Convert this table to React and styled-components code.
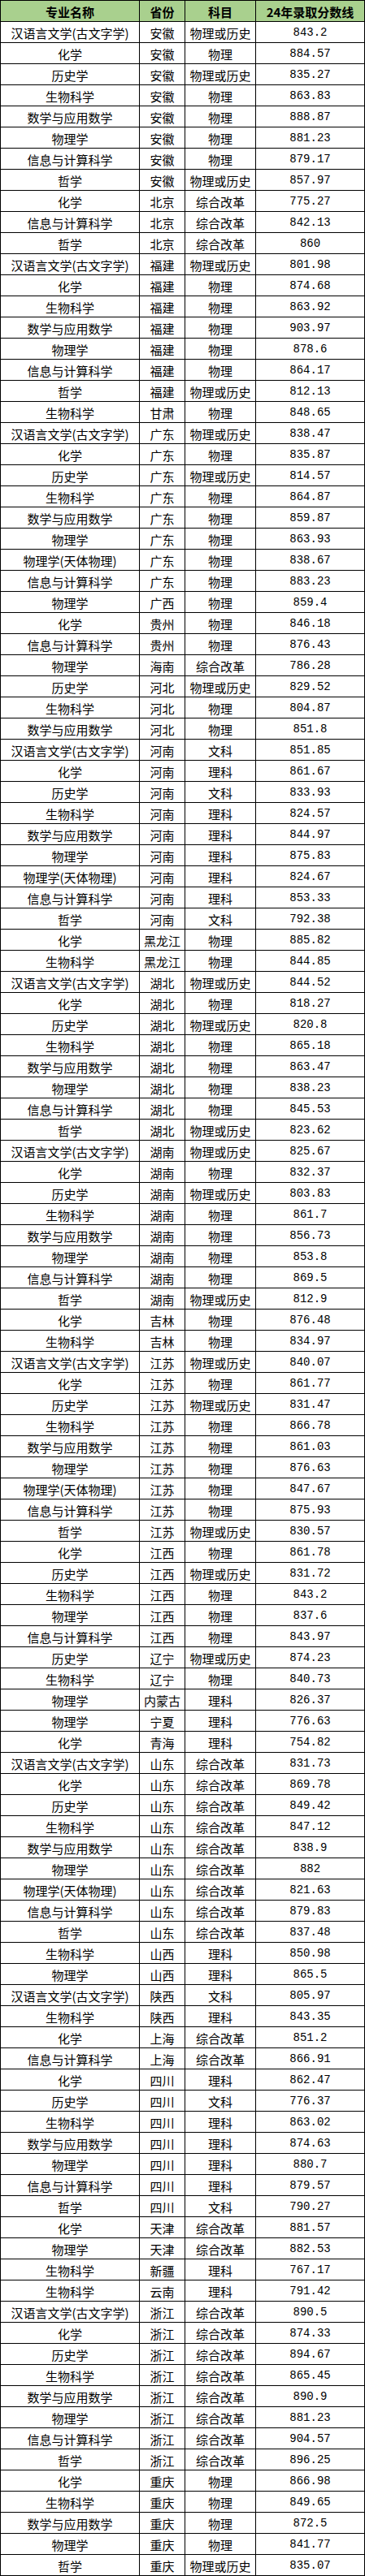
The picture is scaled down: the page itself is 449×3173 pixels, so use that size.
import React from 'react';
import styled, { createGlobalStyle } from 'styled-components';

const GlobalStyle = createGlobalStyle`
  html, body {
    margin: 0;
    padding: 0;
    background: #fff;
  }
  body {
    font-family: "Noto Sans CJK SC", "Liberation Sans", sans-serif;
    color: #000;
  }
`;

// 专业 省份 科目 分数
const raw = `
汉语言文学(古文字学) 安徽 物理或历史 843.2
化学 安徽 物理 884.57
历史学 安徽 物理或历史 835.27
生物科学 安徽 物理 863.83
数学与应用数学 安徽 物理 888.87
物理学 安徽 物理 881.23
信息与计算科学 安徽 物理 879.17
哲学 安徽 物理或历史 857.97
化学 北京 综合改革 775.27
信息与计算科学 北京 综合改革 842.13
哲学 北京 综合改革 860
汉语言文学(古文字学) 福建 物理或历史 801.98
化学 福建 物理 874.68
生物科学 福建 物理 863.92
数学与应用数学 福建 物理 903.97
物理学 福建 物理 878.6
信息与计算科学 福建 物理 864.17
哲学 福建 物理或历史 812.13
生物科学 甘肃 物理 848.65
汉语言文学(古文字学) 广东 物理或历史 838.47
化学 广东 物理 835.87
历史学 广东 物理或历史 814.57
生物科学 广东 物理 864.87
数学与应用数学 广东 物理 859.87
物理学 广东 物理 863.93
物理学(天体物理) 广东 物理 838.67
信息与计算科学 广东 物理 883.23
物理学 广西 物理 859.4
化学 贵州 物理 846.18
信息与计算科学 贵州 物理 876.43
物理学 海南 综合改革 786.28
历史学 河北 物理或历史 829.52
生物科学 河北 物理 804.87
数学与应用数学 河北 物理 851.8
汉语言文学(古文字学) 河南 文科 851.85
化学 河南 理科 861.67
历史学 河南 文科 833.93
生物科学 河南 理科 824.57
数学与应用数学 河南 理科 844.97
物理学 河南 理科 875.83
物理学(天体物理) 河南 理科 824.67
信息与计算科学 河南 理科 853.33
哲学 河南 文科 792.38
化学 黑龙江 物理 885.82
生物科学 黑龙江 物理 844.85
汉语言文学(古文字学) 湖北 物理或历史 844.52
化学 湖北 物理 818.27
历史学 湖北 物理或历史 820.8
生物科学 湖北 物理 865.18
数学与应用数学 湖北 物理 863.47
物理学 湖北 物理 838.23
信息与计算科学 湖北 物理 845.53
哲学 湖北 物理或历史 823.62
汉语言文学(古文字学) 湖南 物理或历史 825.67
化学 湖南 物理 832.37
历史学 湖南 物理或历史 803.83
生物科学 湖南 物理 861.7
数学与应用数学 湖南 物理 856.73
物理学 湖南 物理 853.8
信息与计算科学 湖南 物理 869.5
哲学 湖南 物理或历史 812.9
化学 吉林 物理 876.48
生物科学 吉林 物理 834.97
汉语言文学(古文字学) 江苏 物理或历史 840.07
化学 江苏 物理 861.77
历史学 江苏 物理或历史 831.47
生物科学 江苏 物理 866.78
数学与应用数学 江苏 物理 861.03
物理学 江苏 物理 876.63
物理学(天体物理) 江苏 物理 847.67
信息与计算科学 江苏 物理 875.93
哲学 江苏 物理或历史 830.57
化学 江西 物理 861.78
历史学 江西 物理或历史 831.72
生物科学 江西 物理 843.2
物理学 江西 物理 837.6
信息与计算科学 江西 物理 843.97
历史学 辽宁 物理或历史 874.23
生物科学 辽宁 物理 840.73
物理学 内蒙古 理科 826.37
物理学 宁夏 理科 776.63
化学 青海 理科 754.82
汉语言文学(古文字学) 山东 综合改革 831.73
化学 山东 综合改革 869.78
历史学 山东 综合改革 849.42
生物科学 山东 综合改革 847.12
数学与应用数学 山东 综合改革 838.9
物理学 山东 综合改革 882
物理学(天体物理) 山东 综合改革 821.63
信息与计算科学 山东 综合改革 879.83
哲学 山东 综合改革 837.48
生物科学 山西 理科 850.98
物理学 山西 理科 865.5
汉语言文学(古文字学) 陕西 文科 805.97
生物科学 陕西 理科 843.35
化学 上海 综合改革 851.2
信息与计算科学 上海 综合改革 866.91
化学 四川 理科 862.47
历史学 四川 文科 776.37
生物科学 四川 理科 863.02
数学与应用数学 四川 理科 874.63
物理学 四川 理科 880.7
信息与计算科学 四川 理科 879.57
哲学 四川 文科 790.27
化学 天津 综合改革 881.57
物理学 天津 综合改革 882.53
生物科学 新疆 理科 767.17
生物科学 云南 理科 791.42
汉语言文学(古文字学) 浙江 综合改革 890.5
化学 浙江 综合改革 874.33
历史学 浙江 综合改革 894.67
生物科学 浙江 综合改革 865.45
数学与应用数学 浙江 综合改革 890.9
物理学 浙江 综合改革 881.23
信息与计算科学 浙江 综合改革 904.57
哲学 浙江 综合改革 896.25
化学 重庆 物理 866.98
生物科学 重庆 物理 849.65
数学与应用数学 重庆 物理 872.5
物理学 重庆 物理 841.77
哲学 重庆 物理或历史 835.07
`;

const rows = raw
  .trim()
  .split('\n')
  .map((line) => line.trim().split(/\s+/));

const headers = ['专业名称', '省份', '科目', '24年录取分数线'];

const Sheet = styled.div`
  width: 449px;
  box-sizing: border-box;
  border-left: 1px solid #000;
  border-top: 1px solid #000;
`;

const Row = styled.div`
  display: grid;
  grid-template-columns: 171px 56px 87px 134px;
  height: 26px;
  background: ${(p) => (p.$head ? '#a9d08e' : '#fff')};
`;

const Cell = styled.div`
  box-sizing: border-box;
  height: 26px;
  border-right: 1px solid #000;
  border-bottom: 1px solid #000;
  display: flex;
  align-items: center;
  justify-content: center;
  white-space: nowrap;
  overflow: hidden;
  font-size: 15px;
  font-weight: ${(p) => (p.$head ? 700 : 400)};
  line-height: 1;
  padding-top: 1px;
`;

const Score = styled(Cell)`
  font-family: "Liberation Mono", "Noto Sans CJK SC", monospace;
  font-size: 14px;
`;

export default function App() {
  return (
    <>
      <GlobalStyle />
      <Sheet>
        <Row $head>
          {headers.map((h) => (
            <Cell key={h} $head>
              {h}
            </Cell>
          ))}
        </Row>
        {rows.map(([major, prov, subj, score], i) => (
          <Row key={i}>
            <Cell>{major}</Cell>
            <Cell>{prov}</Cell>
            <Cell>{subj}</Cell>
            <Score>{score}</Score>
          </Row>
        ))}
      </Sheet>
    </>
  );
}
